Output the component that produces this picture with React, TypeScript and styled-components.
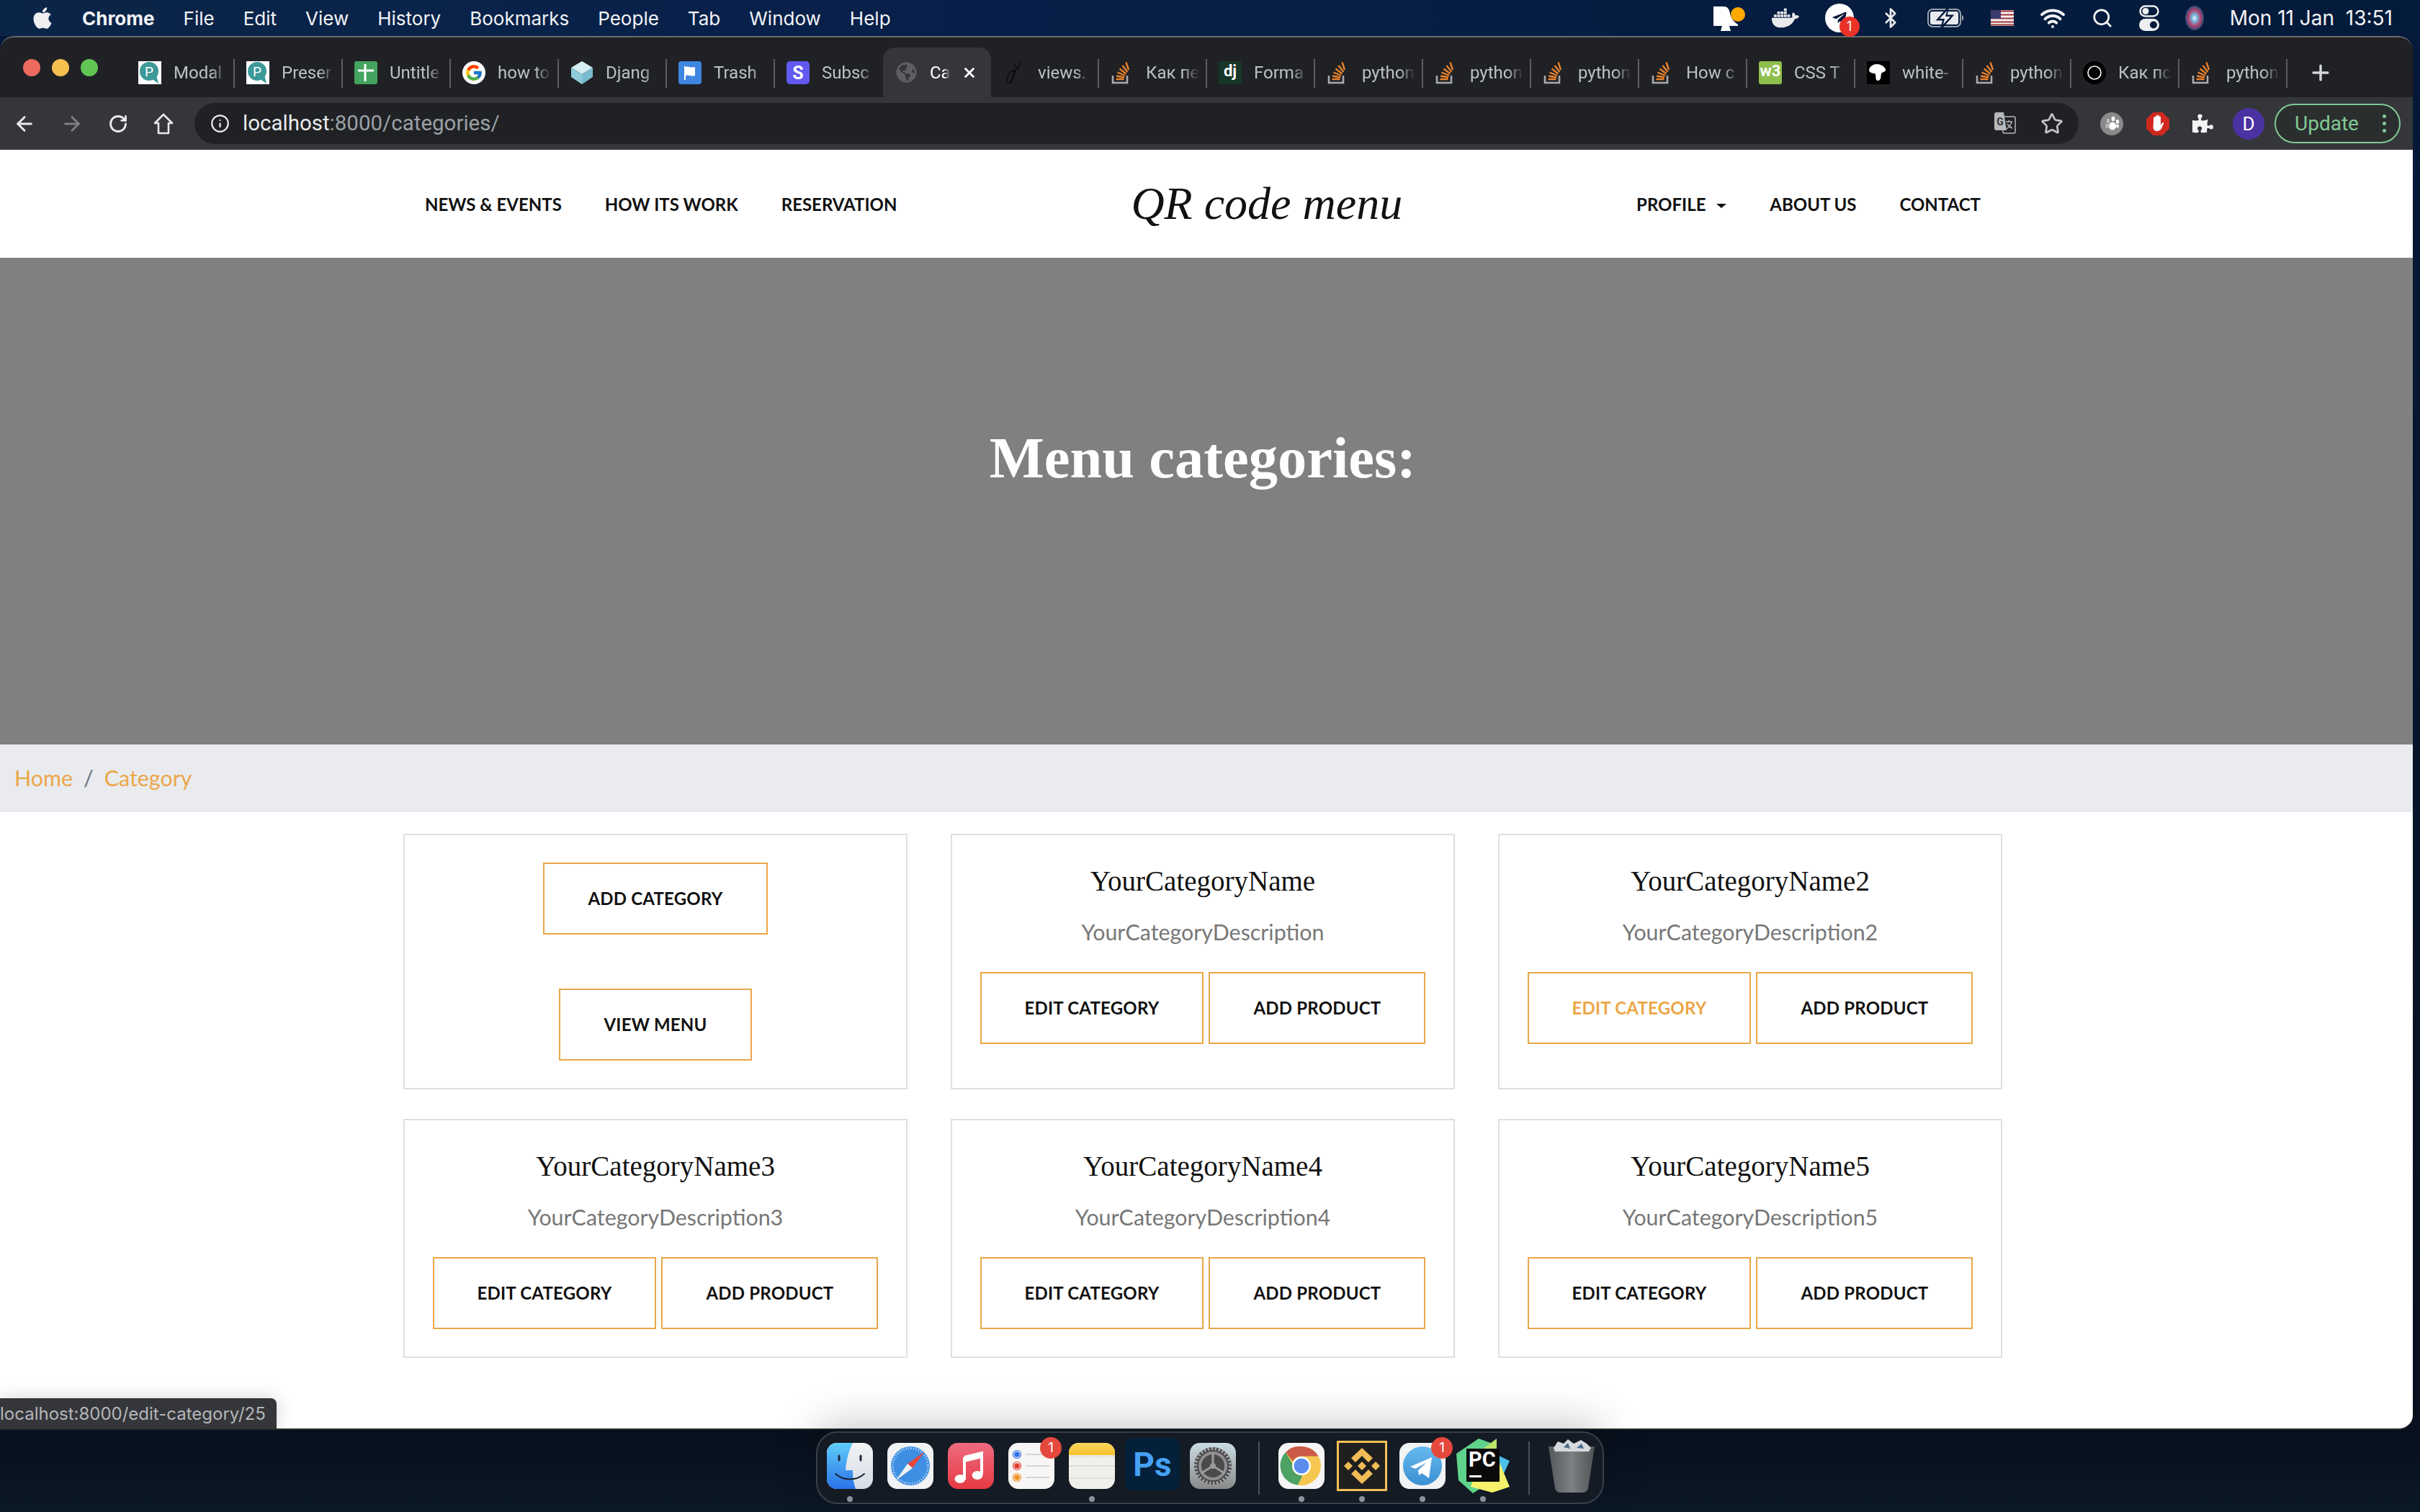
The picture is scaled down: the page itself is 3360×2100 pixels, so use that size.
import type { ReactNode } from 'react';
import styled, { createGlobalStyle } from 'styled-components';
import { ArrowLeft, ArrowRight, Bluetooth, Info, Plus, RotateCw, Search, Star, Wifi, X } from 'lucide-react';
import { FaApple, FaDocker, FaGlobeAmericas, FaPuzzlePiece, FaTelegramPlane } from 'react-icons/fa';
import { FcGoogle } from 'react-icons/fc';

const GlobalStyle = createGlobalStyle`
  html, body { margin: 0; padding: 0; background: #0a1522; }
  * { box-sizing: border-box; }
`;

const ORANGE = '#eba748';

type FavKind = 'modal' | 'sheets' | 'google' | 'django' | 'trash' | 'stripe' | 'globe' | 'scribble' | 'so' | 'dj' | 'w3' | 'white' | 'ring';

const tabs: { title: string; icon: FavKind; active?: boolean; noDivider?: boolean }[] = [
  { title: 'Modal', icon: 'modal' },
  { title: 'Preser', icon: 'modal' },
  { title: 'Untitle', icon: 'sheets' },
  { title: 'how to', icon: 'google' },
  { title: 'Djang', icon: 'django' },
  { title: 'Trash', icon: 'trash' },
  { title: 'Subsc', icon: 'stripe', noDivider: true },
  { title: 'Ca', icon: 'globe', active: true, noDivider: true },
  { title: 'views.', icon: 'scribble' },
  { title: 'Как пе', icon: 'so' },
  { title: 'Forma', icon: 'dj' },
  { title: 'python', icon: 'so' },
  { title: 'python', icon: 'so' },
  { title: 'python', icon: 'so' },
  { title: 'How c', icon: 'so' },
  { title: 'CSS T', icon: 'w3' },
  { title: 'white-', icon: 'white' },
  { title: 'python', icon: 'so' },
  { title: 'Как пс', icon: 'ring' },
  { title: 'python', icon: 'so' },
];

const FavIcon = ({ kind }: { kind: FavKind }) => {
  switch (kind) {
    case 'modal':
      return (
        <svg width="32" height="32" viewBox="0 0 32 32">
          <rect width="32" height="32" fill="#fff" />
          <circle cx="15" cy="14" r="13" fill="#3d9a98" />
          <path d="M18 24l10 7-3-12z" fill="#3d9a98" />
          <text x="15" y="21" fontSize="19" fontFamily="Roboto, sans-serif" fill="#fff" textAnchor="middle">P</text>
        </svg>
      );
    case 'sheets':
      return (
        <svg width="32" height="32" viewBox="0 0 32 32">
          <rect width="32" height="32" rx="3" fill="#43a35f" />
          <path d="M5 13h22M15 4v24" stroke="#fff" strokeWidth="3" />
        </svg>
      );
    case 'google':
      return (
        <FavCircle>
          <FcGoogle size={26} />
        </FavCircle>
      );
    case 'django':
      return (
        <svg width="32" height="32" viewBox="0 0 32 32">
          <path d="M16 0l15 9-15 9L1 9z" fill="#d6edf2" />
          <path d="M1 9l15 9v14L1 22z" fill="#8dcbd9" />
          <path d="M31 9L16 18v14l15-10z" fill="#79bccd" />
        </svg>
      );
    case 'trash':
      return (
        <svg width="32" height="32" viewBox="0 0 32 32">
          <rect width="32" height="32" rx="4" fill="#3f86e0" />
          <path d="M8 7h2v19H8zM10 8c4-2 6 2 13 0v12c-6 2-9-2-13 0z" fill="#fff" />
        </svg>
      );
    case 'stripe':
      return (
        <svg width="32" height="32" viewBox="0 0 32 32">
          <rect width="32" height="32" rx="5" fill="#6159f0" />
          <text x="16" y="25" fontSize="25" fontWeight="700" fontFamily="Roboto, sans-serif" fill="#fff" textAnchor="middle">S</text>
        </svg>
      );
    case 'globe':
      return <FaGlobeAmericas size={29} color="#5d5f63" />;
    case 'scribble':
      return (
        <svg width="32" height="32" viewBox="0 0 32 32" fill="none" stroke="#0b0b0c" strokeWidth="1.4">
          <path d="M26 0L20 12M16 4c2 4 5 6 8 6M18 12C10 14 5 22 6 28c0 3 6 3 8-4 2-5 4-9 4-12zM11 31c2-6 4-12 6-18" />
        </svg>
      );
    case 'so':
      return (
        <svg width="32" height="32" viewBox="0 0 32 32">
          <path d="M3 20v10h20V20" fill="none" stroke="#a8abae" strokeWidth="2.600" />
          <path d="M7.500 25h11" stroke="#e8822d" strokeWidth="2.600" />
          <path d="M8 20.500l11 2M9.500 15.500l10.500 4.500M12.500 10.500l9 7M16.500 6l7 9M21.500 1.500l3.500 10.500" stroke="#e8822d" strokeWidth="2.400" fill="none" />
        </svg>
      );
    case 'dj':
      return (
        <FavSquare $bg="#173628">
          <span>dj</span>
        </FavSquare>
      );
    case 'w3':
      return (
        <FavSquare $bg="#8ebf4c">
          <span>w3</span>
        </FavSquare>
      );
    case 'white':
      return (
        <svg width="32" height="32" viewBox="0 0 32 32">
          <rect width="32" height="32" fill="#000" />
          <path d="M3 12c1-5 6-8 11-8 5 0 10 3 12 7 1 3-3 4-5 5-2 2-1 5-2 8-1 3-4 4-6 2-1-3 0-7-2-9-3 0-8-1-8-5z" fill="#fff" />
        </svg>
      );
    case 'ring':
      return (
        <svg width="32" height="32" viewBox="0 0 32 32">
          <circle cx="16" cy="16" r="16" fill="#000" />
          <circle cx="16" cy="16" r="9" fill="none" stroke="#fff" strokeWidth="1.600" />
        </svg>
      );
  }
};

const categories = [
  { name: 'YourCategoryName', text: 'YourCategoryDescription' },
  { name: 'YourCategoryName2', text: 'YourCategoryDescription2', hover: true },
  { name: 'YourCategoryName3', text: 'YourCategoryDescription3' },
  { name: 'YourCategoryName4', text: 'YourCategoryDescription4' },
  { name: 'YourCategoryName5', text: 'YourCategoryDescription5' },
];

const HomeIcon = () => (
  <svg width="30" height="32" viewBox="0 0 30 32" fill="none" stroke="#e8eaed" strokeWidth="2.600" strokeLinejoin="round">
    <path d="M15 3L3 15h5v14h14V15h5z" />
  </svg>
);

const BellIcon = () => (
  <svg width="46" height="38" viewBox="0 0 46 38">
    <path d="M1 3h14c5 0 8 3 9 10 1 6 6 12 11 15v2H1z" fill="#fff" />
    <path d="M13 30h10l2 7H11z" fill="#fff" />
    <circle cx="35" cy="14" r="10" fill="#ffa800" />
  </svg>
);

const BatteryIcon = () => (
  <svg width="52" height="26" viewBox="0 0 52 26">
    <rect x="1" y="1" width="45" height="24" rx="6" fill="none" stroke="#9aa2ad" strokeWidth="2" />
    <rect x="4" y="4" width="39" height="18" rx="3" fill="#e9ebee" />
    <path d="M48 9c3 1 3 7 0 8z" fill="#9aa2ad" />
    <path d="M28 0L15 15h8l-3 11 14-16h-8z" fill="#06193a" stroke="#06193a" strokeWidth="3" />
    <path d="M27 3L17 14h7l-2 8 10-11h-7z" fill="#e9ebee" />
  </svg>
);

const FlagIcon = () => (
  <svg width="32" height="22" viewBox="0 0 32 22">
    <rect width="32" height="22" fill="#f3f3f3" />
    <path d="M0 1.500h32M0 6.500h32M0 11.500h32M0 16.500h32M0 20.500h32" stroke="#a4343a" strokeWidth="2.200" />
    <rect width="14" height="12" fill="#3c3b6e" />
  </svg>
);

const ControlIcon = () => (
  <svg width="28" height="36" viewBox="0 0 28 36">
    <rect x="1.500" y="1.500" width="25" height="14" rx="7" fill="none" stroke="#eceef0" strokeWidth="2.500" />
    <circle cx="9" cy="8.500" r="4.500" fill="#eceef0" />
    <rect y="19" width="28" height="17" rx="8.500" fill="#eceef0" />
    <circle cx="20" cy="27.500" r="5" fill="#06193a" />
  </svg>
);

const SiriIcon = () => (
  <svg width="26" height="34" viewBox="0 0 26 34">
    <defs>
      <radialGradient id="siri">
        <stop offset="0" stopColor="#f3f4ff" />
        <stop offset="0.3" stopColor="#6fb6d8" />
        <stop offset="0.65" stopColor="#b4436f" />
        <stop offset="1" stopColor="#2a4a78" />
      </radialGradient>
    </defs>
    <ellipse cx="13" cy="17" rx="13" ry="17" fill="url(#siri)" />
  </svg>
);

const TranslateIcon = () => (
  <svg width="30" height="32" viewBox="0 0 30 32">
    <rect x="12" y="6" width="17" height="23" rx="2" fill="#202124" stroke="#b6b8bb" strokeWidth="1.500" />
    <path d="M16 13h9M20 11v2M24 13c-1 6-4 8-7 10M18 16c2 3 4 5 7 6" stroke="#b6b8bb" strokeWidth="1.500" fill="none" />
    <path d="M0 3c0-2 1-3 3-3h10l4 25H3c-2 0-3-1-3-3z" fill="#b6b8bb" />
    <text x="8" y="18" fontSize="14" fontWeight="700" fontFamily="Roboto, sans-serif" fill="#35363a" textAnchor="middle">G</text>
  </svg>
);

const PawIcon = () => (
  <svg width="32" height="32" viewBox="0 0 32 32">
    <circle cx="16" cy="16" r="16" fill="#8a8a8a" />
    <ellipse cx="11" cy="12" rx="2" ry="3" fill="#c6c6c6" />
    <ellipse cx="18" cy="9" rx="2.400" ry="3.200" fill="#fff" />
    <ellipse cx="24" cy="13" rx="2.200" ry="3" fill="#fff" />
    <ellipse cx="24" cy="19" rx="2" ry="2.600" fill="#fff" />
    <ellipse cx="17" cy="19" rx="5" ry="5.500" fill="#fff" />
    <ellipse cx="10" cy="19" rx="3" ry="3" fill="#b5b5b5" />
  </svg>
);

const StopHandIcon = () => (
  <svg width="32" height="32" viewBox="0 0 32 32">
    <path d="M9.500 0h13L32 9.500v13L22.500 32h-13L0 22.500v-13z" fill="#d0281f" />
    <path d="M10 14V8c0-2 2.500-2 2.500 0v5-7c0-2 2.500-2 2.500 0v7-8c0-2 2.500-2 2.500 0v8-6c0-2 2.500-2 2.500 0v11c1-2 2-4 3.500-4 1.500 0 0 3-1 5-1 3-3 7-7 7s-6-2-6-6z" fill="#fff" />
  </svg>
);

const FinderIcon = () => (
  <svg width="64" height="64" viewBox="0 0 64 64">
    <defs>
      <linearGradient id="finderL" x1="0" y1="0" x2="0" y2="1">
        <stop offset="0" stopColor="#5fcdf8" />
        <stop offset="1" stopColor="#2a72ea" />
      </linearGradient>
      <linearGradient id="finderR" x1="0" y1="0" x2="0" y2="1">
        <stop offset="0" stopColor="#f2f3f5" />
        <stop offset="1" stopColor="#d5dce6" />
      </linearGradient>
      <clipPath id="finderClip">
        <rect width="64" height="64" rx="14" />
      </clipPath>
    </defs>
    <g clipPath="url(#finderClip)">
      <rect width="64" height="64" fill="url(#finderR)" />
      <path d="M0 0h36c-6 12-9 24-10 38h10c0 10 1 18 4 26H0z" fill="url(#finderL)" />
    </g>
    <path d="M17 18v6M47 18v6" stroke="#1c2a3c" strokeWidth="3" strokeLinecap="round" />
    <path d="M12 43c11 10 29 10 40 0" fill="none" stroke="#17202c" strokeWidth="1.800" strokeLinecap="round" />
  </svg>
);

const SafariIcon = () => (
  <svg width="64" height="64" viewBox="0 0 64 64">
    <rect width="64" height="64" rx="14" fill="#f1f2f3" />
    <circle cx="32" cy="32" r="27" fill="#3e8fe3" />
    <circle cx="32" cy="32" r="24.500" fill="none" stroke="#cfe3f7" strokeWidth="3" strokeDasharray="1 2.500" />
    <path d="M52 12L28 29l7 6z" fill="#e8483b" />
    <path d="M12 52l16-23 7 6z" fill="#f1f1f1" />
  </svg>
);

const MusicIcon = () => (
  <svg width="64" height="64" viewBox="0 0 64 64">
    <defs>
      <linearGradient id="musicBg" x1="0" y1="0" x2="0" y2="1">
        <stop offset="0" stopColor="#ee6b80" />
        <stop offset="1" stopColor="#e63a44" />
      </linearGradient>
    </defs>
    <rect width="64" height="64" rx="14" fill="url(#musicBg)" />
    <path d="M23 20l24-6v30" fill="none" stroke="#fff" strokeWidth="4" />
    <path d="M23 20v31" stroke="#fff" strokeWidth="4" />
    <path d="M23 20l24-6v7l-24 6z" fill="#fff" />
    <ellipse cx="17" cy="50" rx="7.500" ry="6" fill="#fff" />
    <ellipse cx="41" cy="45" rx="7.500" ry="6" fill="#fff" />
  </svg>
);

const RemindersIcon = () => (
  <svg width="64" height="64" viewBox="0 0 64 64">
    <rect width="64" height="64" rx="14" fill="#f7f6f4" />
    {[
      { y: 16, c: '#2e72e6' },
      { y: 32, c: '#e33d32' },
      { y: 48, c: '#ef8f22' },
    ].map(r => (
      <g key={r.y}>
        <circle cx="12" cy={r.y} r="5.500" fill="none" stroke={r.c} strokeWidth="1.200" />
        <circle cx="12" cy={r.y} r="3.800" fill={r.c} />
        <path d={`M24 ${r.y}h33`} stroke="#c9c9c9" strokeWidth="1.500" />
      </g>
    ))}
  </svg>
);

const NotesIcon = () => (
  <svg width="64" height="64" viewBox="0 0 64 64">
    <defs>
      <linearGradient id="notesTop" x1="0" y1="0" x2="0" y2="1">
        <stop offset="0" stopColor="#fbd95c" />
        <stop offset="1" stopColor="#f5c02e" />
      </linearGradient>
      <clipPath id="notesClip">
        <rect width="64" height="64" rx="14" />
      </clipPath>
    </defs>
    <g clipPath="url(#notesClip)">
      <rect width="64" height="64" fill="#f1efeb" />
      <rect width="64" height="17" fill="url(#notesTop)" />
      <path d="M0 19h64" stroke="#bbb" strokeWidth="1" strokeDasharray="1 1.500" />
      <path d="M0 32h64M0 49h64" stroke="#dcdad5" strokeWidth="1.500" />
    </g>
  </svg>
);

const PhotoshopIcon = () => (
  <svg width="76" height="78" viewBox="0 0 76 78">
    <rect width="76" height="73" rx="12" fill="#04203a" />
    <text x="38" y="53" fontSize="46" fontWeight="700" fontFamily="Roboto, sans-serif" fill="#45a1f5" textAnchor="middle">Ps</text>
  </svg>
);

const SettingsIcon = () => (
  <svg width="64" height="64" viewBox="0 0 64 64">
    <defs>
      <linearGradient id="settingsBg" x1="0" y1="0" x2="0" y2="1">
        <stop offset="0" stopColor="#c9dce3" />
        <stop offset="1" stopColor="#8a8a8a" />
      </linearGradient>
    </defs>
    <rect width="64" height="64" rx="14" fill="url(#settingsBg)" />
    <circle cx="32" cy="32" r="26" fill="#4a4a4c" />
    <circle cx="32" cy="32" r="24" fill="none" stroke="#a6a6a8" strokeWidth="4" strokeDasharray="2.500 2.500" />
    <circle cx="32" cy="32" r="18" fill="none" stroke="#8f8f91" strokeWidth="4" />
    <path d="M32 32V14M32 32L16 42M32 32l16 10" stroke="#9b9b9d" strokeWidth="3" />
    <circle cx="32" cy="32" r="4" fill="#9b9b9d" />
  </svg>
);

const ChromeIcon = () => (
  <svg width="64" height="64" viewBox="0 0 64 64">
    <rect width="64" height="64" rx="14" fill="#f5f5f5" />
    <circle cx="32" cy="32" r="27" fill="#f6c750" />
    <path d="M32 5a27 27 0 0 1 23.400 13.500H32a13.500 13.500 0 0 0-12 7L10 13A27 27 0 0 1 32 5z" fill="#cc5a49" />
    <path d="M10 13l13 22 10 11-6 12.500A27 27 0 0 1 10 13z" fill="#4ea264" />
    <circle cx="32" cy="32" r="13" fill="#fff" />
    <circle cx="32" cy="32" r="10.500" fill="#5a8ded" />
  </svg>
);

const BinanceIcon = () => (
  <svg width="70" height="70" viewBox="0 0 70 70">
    <rect x="1.500" y="1.500" width="67" height="67" fill="#1f1f20" stroke="#f5bf57" strokeWidth="3" />
    <path d="M35 10l15 14-6 6-9-9-9 9-6-6zM35 60L20 46l6-6 9 9 9-9 6 6zM35 29l6 6-6 6-6-6zM16 29l6 6-6 6-6-6zM54 29l6 6-6 6-6-6z" fill="#f0bc55" />
  </svg>
);

const TelegramIcon = () => (
  <svg width="64" height="64" viewBox="0 0 64 64">
    <defs>
      <linearGradient id="tgBg" x1="0" y1="0" x2="0" y2="1">
        <stop offset="0" stopColor="#67b9ef" />
        <stop offset="1" stopColor="#3a8fd2" />
      </linearGradient>
    </defs>
    <rect width="64" height="64" rx="14" fill="#f2f3f4" />
    <circle cx="32" cy="32" r="27" fill="url(#tgBg)" />
    <path d="M15 33l30-13-4 29-10-7-4 3-1-7 12-11-16 9z" fill="#fff" />
  </svg>
);

const PyCharmIcon = () => (
  <svg width="76" height="78" viewBox="0 0 76 78">
    <path d="M1 22L32 1l22 8 6 26-14 28-22 14-20-18z" fill="#5fd38b" />
    <path d="M57 1v26l-24-8z" fill="#b9e26a" />
    <path d="M50 20l25 12-12 26z" fill="#4cc0ea" />
    <path d="M60 32l15 36-24 8-30-8 6-20z" fill="#f6f16a" />
    <rect x="15" y="15" width="46" height="46" fill="#0a0a0a" />
    <text x="18" y="40" fontSize="29" fontWeight="700" fontFamily="Roboto, sans-serif" fill="#fff">PC</text>
    <rect x="19" y="52" width="17" height="3" fill="#fff" />
  </svg>
);

const TrashIcon = () => (
  <svg width="66" height="74" viewBox="0 0 66 74">
    <defs>
      <linearGradient id="binBg" x1="0" y1="0" x2="1" y2="0">
        <stop offset="0" stopColor="#55585c" />
        <stop offset="0.5" stopColor="#7d8083" />
        <stop offset="1" stopColor="#505356" />
      </linearGradient>
    </defs>
    <path d="M1 10h64l-9 58c-1 4-4 6-8 6H18c-4 0-7-2-8-6z" fill="url(#binBg)" />
    <path d="M8 12l6-9 8 3 6-6 8 6 10-5 8 5 6 6-3 5H10z" fill="#d5d8dc" />
    <path d="M22 11l6-6 3 8zM40 12l7-6 3 7z" fill="#4a6c8c" />
  </svg>
);

const dock: { key: string; icon: ReactNode; badge?: boolean; running?: boolean; divider?: boolean }[] = [
  { key: 'finder', icon: <FinderIcon />, running: true },
  { key: 'safari', icon: <SafariIcon /> },
  { key: 'music', icon: <MusicIcon /> },
  { key: 'reminders', icon: <RemindersIcon />, badge: true },
  { key: 'notes', icon: <NotesIcon />, running: true },
  { key: 'ps', icon: <PhotoshopIcon /> },
  { key: 'settings', icon: <SettingsIcon />, divider: true },
  { key: 'chrome', icon: <ChromeIcon />, running: true },
  { key: 'binance', icon: <BinanceIcon />, running: true },
  { key: 'telegram', icon: <TelegramIcon />, badge: true, running: true },
  { key: 'pycharm', icon: <PyCharmIcon />, running: true, divider: true },
  { key: 'trash', icon: <TrashIcon /> },
];

export default function App() {
  return (
    <Screen>
      <GlobalStyle />
      <MenuBar>
        <MenuLeft>
          <AppleMark>
            <FaApple size={34} color="#eef0f2" />
          </AppleMark>
          <MenuItem $bold>Chrome</MenuItem>
          <MenuItem>File</MenuItem>
          <MenuItem>Edit</MenuItem>
          <MenuItem>View</MenuItem>
          <MenuItem>History</MenuItem>
          <MenuItem>Bookmarks</MenuItem>
          <MenuItem>People</MenuItem>
          <MenuItem>Tab</MenuItem>
          <MenuItem>Window</MenuItem>
          <MenuItem>Help</MenuItem>
        </MenuLeft>
        <MenuRight>
          <BellIcon />
          <FaDocker size={38} color="#e8eaec" />
          <TelegramStatus>
            <FaTelegramPlane size={22} color="#06193a" />
            <StatusBadge>1</StatusBadge>
          </TelegramStatus>
          <Bluetooth size={30} color="#e6e8ea" strokeWidth={2.2} />
          <BatteryIcon />
          <FlagIcon />
          <Wifi size={36} color="#f2f3f4" strokeWidth={2.6} />
          <Search size={30} color="#f2f3f4" strokeWidth={2.2} />
          <ControlIcon />
          <SiriIcon />
          <Clock>Mon 11 Jan&nbsp; 13:51</Clock>
        </MenuRight>
      </MenuBar>

      <BrowserWindow>
        <TabStrip>
          <TrafficLights>
            <Light $color="#ed6a5e" />
            <Light $color="#f5bf4f" />
            <Light $color="#61c554" />
          </TrafficLights>
          {tabs.map((tab, i) => (
            <Tab key={i} $active={tab.active} $divider={!tab.noDivider}>
              <FavSlot>
                <FavIcon kind={tab.icon} />
              </FavSlot>
              <TabTitle $active={tab.active}>{tab.title}</TabTitle>
              {tab.active && (
                <TabClose>
                  <X size={22} color="#fff" strokeWidth={3} />
                </TabClose>
              )}
            </Tab>
          ))}
          <NewTab>
            <Plus size={34} color="#d6d8da" strokeWidth={2.4} />
          </NewTab>
        </TabStrip>

        <Toolbar>
          <NavButtons>
            <ArrowLeft size={32} color="#e8eaed" strokeWidth={2.2} />
            <ArrowRight size={32} color="#7d7f82" strokeWidth={2.2} />
            <RotateCw size={28} color="#e8eaed" strokeWidth={2.4} />
            <HomeIcon />
          </NavButtons>
          <Omnibox>
            <Info size={27} color="#e8eaed" strokeWidth={2} />
            <Url>
              localhost<UrlRest>:8000/categories/</UrlRest>
            </Url>
            <OmniIcons>
              <TranslateIcon />
              <Star size={32} color="#c2c4c6" strokeWidth={2} />
            </OmniIcons>
          </Omnibox>
          <Extensions>
            <PawIcon />
            <StopHandIcon />
            <FaPuzzlePiece size={29} color="#f1f3f4" />
            <Avatar>D</Avatar>
          </Extensions>
          <UpdatePill>
            Update
            <PillDots>
              <i />
              <i />
              <i />
            </PillDots>
          </UpdatePill>
        </Toolbar>

        <Page>
          <TopNav>
            <NavGroup>
              <NavLink>NEWS &amp; EVENTS</NavLink>
              <NavLink>HOW ITS WORK</NavLink>
              <NavLink>RESERVATION</NavLink>
            </NavGroup>
            <Logo>QR code menu</Logo>
            <NavGroup>
              <NavLink>
                PROFILE <Caret />
              </NavLink>
              <NavLink>ABOUT US</NavLink>
              <NavLink>CONTACT</NavLink>
            </NavGroup>
          </TopNav>

          <Hero>
            <HeroTitle>Menu categories:</HeroTitle>
          </Hero>

          <Breadcrumbs>
            <Crumb>Home</Crumb>
            <CrumbSep>/</CrumbSep>
            <Crumb>Category</Crumb>
          </Breadcrumbs>

          <CardGrid>
            <Card>
              <OutlineButton>ADD CATEGORY</OutlineButton>
              <StackedButton>VIEW MENU</StackedButton>
            </Card>
            {categories.map(c => (
              <Card key={c.name}>
                <CardTitle>{c.name}</CardTitle>
                <CardText>{c.text}</CardText>
                <ButtonRow>
                  <OutlineButton $hover={c.hover}>EDIT CATEGORY</OutlineButton>
                  <OutlineButton>ADD PRODUCT</OutlineButton>
                </ButtonRow>
              </Card>
            ))}
          </CardGrid>

          <StatusBubble>localhost:8000/edit-category/25</StatusBubble>
        </Page>
      </BrowserWindow>

      <DockArea>
        <Dock>
          {dock.map(item => (
            <DockGroup key={item.key}>
              <DockSlot>
                {item.icon}
                {item.badge && <DockBadge>1</DockBadge>}
                {item.running && <RunDot />}
              </DockSlot>
              {item.divider && <DockDivider />}
            </DockGroup>
          ))}
        </Dock>
      </DockArea>
    </Screen>
  );
}

const Screen = styled.div`
  width: 3360px;
  height: 2100px;
  overflow: hidden;
  display: flex;
  flex-direction: column;
  background: linear-gradient(180deg, #0b2347 0, #06193a 50px, #07101c 1990px, #0b1826 2100px);
  font-family: 'Lato', sans-serif;
`;

const MenuBar = styled.header`
  height: 50px;
  flex: none;
  display: flex;
  justify-content: space-between;
  align-items: center;
  padding: 0 38px 0 42px;
  background: linear-gradient(90deg, #0b2548, #08204a 35%, #041a3a);
  color: #f2f3f5;
  font-family: 'Inter', sans-serif;
  font-size: 26px;
`;

const MenuLeft = styled.nav`
  display: flex;
  align-items: center;
  gap: 40px;
`;

const AppleMark = styled.span`
  display: flex;
  margin-right: -2px;
`;

const MenuItem = styled.span<{ $bold?: boolean }>`
  font-weight: ${p => (p.$bold ? 700 : 400)};
`;

const MenuRight = styled.div`
  display: flex;
  align-items: center;
  gap: 36px;
`;

const TelegramStatus = styled.span`
  position: relative;
  width: 40px;
  height: 40px;
  border-radius: 50%;
  background: #fff;
  display: flex;
  align-items: center;
  justify-content: center;
`;

const StatusBadge = styled.span`
  position: absolute;
  right: -8px;
  bottom: -6px;
  width: 28px;
  height: 28px;
  border-radius: 50%;
  background: #ea3227;
  color: #fff;
  font-size: 18px;
  text-align: center;
  line-height: 28px;
`;

const Clock = styled.span`
  font-size: 28px;
`;

const BrowserWindow = styled.main`
  width: 3350px;
  height: 1936px;
  flex: none;
  display: flex;
  flex-direction: column;
  border-radius: 20px 20px 20px 0;
  overflow: hidden;
  background: #202124;
  border-top: 2px solid #6a6b6d;
  border-bottom: 2px solid #2a2a2c;
`;

const TabStrip = styled.div`
  height: 83px;
  flex: none;
  display: flex;
  align-items: flex-end;
  padding-left: 32px;
  background: #202124;
`;

const TrafficLights = styled.div`
  display: flex;
  align-self: flex-start;
  gap: 16px;
  margin: 30px 40px 0 0;
`;

const Light = styled.span<{ $color: string }>`
  width: 24px;
  height: 24px;
  border-radius: 50%;
  background: ${p => p.$color};
`;

const Tab = styled.div<{ $active?: boolean; $divider?: boolean }>`
  position: relative;
  width: 150px;
  height: 69px;
  flex: none;
  display: flex;
  align-items: center;
  padding-left: 16px;
  border-radius: 16px 16px 0 0;
  background: ${p => (p.$active ? '#35363a' : 'transparent')};

  &::after {
    content: '';
    display: ${p => (p.$divider ? 'block' : 'none')};
    position: absolute;
    right: 0;
    top: 16px;
    width: 2px;
    height: 40px;
    background: #5c5e61;
  }
`;

const FavSlot = styled.span`
  width: 32px;
  height: 32px;
  flex: none;
  display: flex;
  align-items: center;
  justify-content: center;
`;

const FavCircle = styled.span`
  width: 32px;
  height: 32px;
  border-radius: 50%;
  background: #fff;
  display: flex;
  align-items: center;
  justify-content: center;
`;

const FavSquare = styled.span<{ $bg: string }>`
  width: 32px;
  height: 32px;
  border-radius: 3px;
  background: ${p => p.$bg};
  color: #fff;
  font-family: 'Roboto', sans-serif;
  font-weight: 700;
  font-size: 22px;
  line-height: 28px;
  text-align: center;
`;

const TabTitle = styled.span<{ $active?: boolean }>`
  width: ${p => (p.$active ? '28px' : '74px')};
  margin-left: 17px;
  white-space: nowrap;
  font-family: 'Roboto', sans-serif;
  font-size: 24px;
  color: ${p => (p.$active ? '#fff' : '#bdc1c6')};
  mask-image: linear-gradient(90deg, #000 70%, transparent);
`;

const TabClose = styled.span`
  display: flex;
  margin-left: 16px;
`;

const NewTab = styled.span`
  display: flex;
  margin: 0 0 17px 29px;
`;

const Toolbar = styled.div`
  height: 73px;
  flex: none;
  display: flex;
  align-items: center;
  background: #35363a;
  padding-left: 18px;
`;

const NavButtons = styled.div`
  width: 235px;
  flex: none;
  display: flex;
  align-items: center;
  gap: 34px;
  margin-right: 17px;
`;

const Omnibox = styled.div`
  width: 2616px;
  height: 57px;
  flex: none;
  display: flex;
  align-items: center;
  padding: 0 21px 0 22px;
  border-radius: 29px;
  background: #202124;
`;

const Url = styled.span`
  margin: -2px 0 0 18px;
  flex: 1;
  font-family: 'Roboto', sans-serif;
  font-size: 29.5px;
  color: #e8eaed;
`;

const UrlRest = styled.span`
  color: #9aa0a6;
`;

const OmniIcons = styled.div`
  display: flex;
  align-items: center;
  gap: 34px;
`;

const Extensions = styled.div`
  display: flex;
  align-items: center;
  margin-left: 30px;
  gap: 32px;
`;

const Avatar = styled.span`
  width: 44px;
  height: 44px;
  margin-left: -5px;
  border-radius: 50%;
  background: #4b32a3;
  color: #fff;
  font-family: 'Roboto', sans-serif;
  font-size: 26px;
  line-height: 44px;
  text-align: center;
`;

const UpdatePill = styled.span`
  width: 175px;
  height: 55px;
  margin-left: 14px;
  display: flex;
  align-items: center;
  justify-content: space-between;
  padding: 0 18px 0 26px;
  border: 2px solid #81c995;
  border-radius: 28px;
  background: #2b2e2f;
  color: #81c995;
  font-family: 'Roboto', sans-serif;
  font-size: 28px;
`;

const PillDots = styled.span`
  display: flex;
  flex-direction: column;
  gap: 5px;

  i {
    width: 5px;
    height: 5px;
    border-radius: 50%;
    background: #81c995;
  }
`;

const Page = styled.div`
  position: relative;
  flex: 1;
  background: #fff;
  overflow: hidden;
`;

const TopNav = styled.div`
  height: 150px;
  display: flex;
  justify-content: space-between;
  align-items: center;
  padding: 0 600px 0 590px;
`;

const NavGroup = styled.div`
  display: flex;
  align-items: center;
  gap: 60px;
`;

const NavLink = styled.a`
  font-size: 24px;
  font-weight: 700;
  color: #111;
  white-space: nowrap;
`;

const Caret = styled.i`
  display: inline-block;
  margin-left: 9px;
  vertical-align: 4px;
  border-top: 6px solid #111;
  border-left: 7px solid transparent;
  border-right: 7px solid transparent;
`;

const Logo = styled.div`
  font-family: 'Liberation Serif', serif;
  font-style: italic;
  font-size: 64px;
  color: #111;
  white-space: nowrap;
`;

const Hero = styled.section`
  height: 676px;
  display: flex;
  justify-content: center;
  padding: 228px 10px 0 0;
  background: #808080;
`;

const HeroTitle = styled.h1`
  margin: 0;
  font-family: 'Liberation Serif', serif;
  font-size: 80.5px;
  font-weight: 700;
  line-height: 1.25;
  color: #fff;
`;

const Breadcrumbs = styled.nav`
  height: 94px;
  display: flex;
  align-items: center;
  gap: 15px;
  padding: 0 0 2px 20px;
  background: #e9ebef;
  font-size: 30.4px;
`;

const Crumb = styled.a`
  color: ${ORANGE};
`;

const CrumbSep = styled.span`
  color: #6c757d;
`;

const CardGrid = styled.div`
  display: grid;
  grid-template-columns: repeat(3, 700px);
  column-gap: 60px;
  row-gap: 41px;
  padding: 30px 0 0 560px;
`;

const Card = styled.article`
  display: flex;
  flex-direction: column;
  align-items: center;
  padding: 38px 0;
  border: 2px solid #dfdfdf;
`;

const CardTitle = styled.h3`
  margin: 0;
  font-family: 'Liberation Serif', serif;
  font-size: 39px;
  font-weight: 400;
  line-height: 52px;
  color: #111;
`;

const CardText = styled.p`
  margin: 24px 0 0;
  font-size: 30.4px;
  line-height: 40px;
  color: #777;
`;

const ButtonRow = styled.div`
  display: flex;
  gap: 7px;
  margin-top: 36px;
`;

const OutlineButton = styled.a<{ $hover?: boolean }>`
  height: 100px;
  display: flex;
  align-items: center;
  padding: 0 60px 2px;
  border: 2px solid ${ORANGE};
  background: #fff;
  font-size: 24px;
  font-weight: 700;
  letter-spacing: 0.2px;
  color: ${p => (p.$hover ? ORANGE : '#111')};
  white-space: nowrap;
`;

const StackedButton = styled(OutlineButton)`
  margin-top: 75px;
`;

const StatusBubble = styled.div`
  position: absolute;
  left: 0;
  bottom: 0;
  width: 384px;
  height: 42px;
  border-radius: 0 8px 0 0;
  background: #35363a;
  color: #b4b6b9;
  font-family: 'Inter', sans-serif;
  font-size: 24px;
  line-height: 44px;
  white-space: nowrap;
  box-shadow: 0 0 24px rgba(0, 0, 0, 0.18);
`;

const DockArea = styled.footer`
  flex: 1;
  display: flex;
  justify-content: center;
  align-items: flex-start;
  padding-top: 2px;
`;

const Dock = styled.div`
  position: relative;
  width: 1094px;
  height: 101px;
  display: flex;
  padding-left: 3px;
  border: 2px solid #394049;
  border-radius: 30px;
  background: #141b24;
  box-shadow: 0 -10px 60px rgba(0, 0, 0, 0.22);
`;

const DockGroup = styled.div`
  display: flex;
`;

const DockSlot = styled.div`
  position: relative;
  width: 84px;
  height: 97px;
  display: flex;
  justify-content: center;
  align-items: center;
  padding-bottom: 5px;

  & > svg {
    flex: none;
  }
`;

const DockBadge = styled.span`
  position: absolute;
  top: 6px;
  right: 0;
  width: 30px;
  height: 30px;
  border-radius: 50%;
  background: #e5483c;
  color: #fff;
  font-family: 'Inter', sans-serif;
  font-size: 19px;
  line-height: 30px;
  text-align: center;
`;

const RunDot = styled.i`
  position: absolute;
  left: 38px;
  bottom: 1px;
  width: 8px;
  height: 8px;
  border-radius: 50%;
  background: #8b929a;
`;

const DockDivider = styled.span`
  width: 2px;
  height: 74px;
  margin: 12px 16px 0 21px;
  background: #4a5059;
`;
